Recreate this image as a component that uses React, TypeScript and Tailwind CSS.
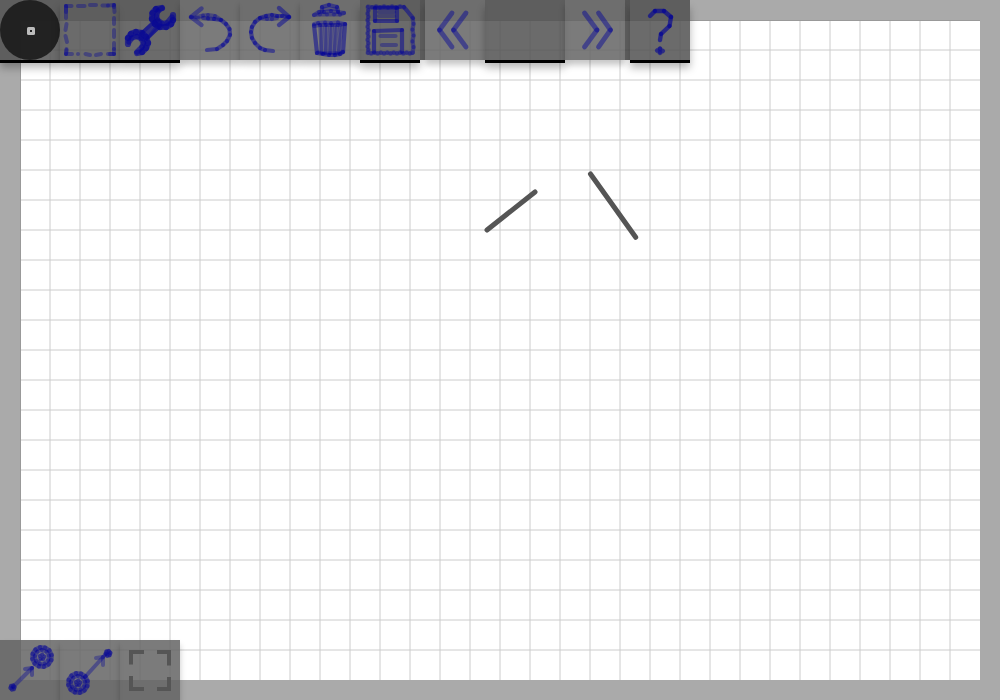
import type { ReactNode } from "react";

type Pt = [number, number];

/** A hand-drawn stroke: translucent segments whose joints overlap and darken. */
function Sketch({ pts, w = 4.4, o = 0.5 }: { pts: Pt[]; w?: number; o?: number }) {
  return (
    <g stroke="#000098" strokeWidth={w} strokeLinecap="round" strokeOpacity={o}>
      {pts.slice(1).map((p, i) => (
        <line key={i} x1={pts[i][0]} y1={pts[i][1]} x2={p[0]} y2={p[1]} />
      ))}
    </g>
  );
}

function Icon({ children }: { children: ReactNode }) {
  return (
    <svg className="block size-[60px]" viewBox="0 0 60 60" fill="none">
      {children}
    </svg>
  );
}

function ring(cx: number, cy: number, r: number, n: number): Pt[] {
  return Array.from({ length: n + 1 }, (_, i) => {
    const a = (i / n) * Math.PI * 2 - 0.2;
    return [cx + r * Math.cos(a), cy + r * Math.sin(a)] as Pt;
  });
}

function dense(a: Pt, b: Pt, n: number, wob = 0.5): Pt[] {
  return Array.from({ length: n + 1 }, (_, i) => {
    const t = i / n;
    const s = i % 2 ? wob : -wob;
    const horizontal = Math.abs(b[0] - a[0]) > Math.abs(b[1] - a[1]);
    return [a[0] + (b[0] - a[0]) * t + (horizontal ? 0 : s), a[1] + (b[1] - a[1]) * t + (horizontal ? s : 0)] as Pt;
  });
}

function PenIcon() {
  return (
    <Icon>
      <circle cx="30" cy="30" r="30" fill="#1d1d1d" fillOpacity="0.93" />
      <rect x="27" y="27" width="8" height="8" rx="1.5" fill="#bcbcbc" />
      <rect x="30" y="30" width="2" height="2" fill="#222" />
    </Icon>
  );
}

function SelectIcon() {
  const dashes: Pt[][] = [
    [[6, 6], [11.5, 6]], [[18, 6], [24.5, 6]], [[30, 5], [36, 5]], [[42.5, 5.5], [48, 5.5]], [[48, 5.5], [54, 5]],
    [[6, 6], [6, 12]], [[6, 6], [6, 18]], [[6.5, 24], [5.5, 30]], [[5.5, 36], [7, 42]], [[6.5, 49], [6, 54]],
    [[6, 54], [12, 54]], [[6, 54], [6.5, 50]], [[18, 54], [18, 54]], [[25.5, 54], [30, 55]], [[36, 55], [41, 54]],
    [[48, 54], [54, 54]], [[50, 54], [54, 54]], [[54, 54], [54, 49]], [[54, 49], [54, 43]], [[54, 37], [54, 30]],
    [[54, 24], [54, 18]], [[54.5, 12], [54, 5]], [[54, 7], [54, 5]],
  ];
  return <Icon>{dashes.map((d, i) => <Sketch key={i} pts={d} w={4} o={0.35} />)}</Icon>;
}

function WrenchIcon() {
  const head: Pt[] = [[42, 8], [36, 9], [32.5, 13], [32, 19], [35, 24], [40, 27], [46, 27], [51, 24], [53, 20], [53, 15]];
  const tail: Pt[] = [[8, 44], [8, 38], [11, 34], [16, 32], [22, 33], [26, 37], [28, 43], [26, 48], [22, 52], [17, 53]];
  return (
    <Icon>
      <g opacity="0.92">
        <Sketch pts={head} w={6.2} o={0.65} />
        <Sketch pts={[[42, 8], [38, 11], [36.5, 16], [37.5, 20], [42, 23.5], [47, 23], [52, 17]]} w={5.4} o={0.6} />
        <Sketch pts={tail} w={6.2} o={0.65} />
        <Sketch pts={[[9, 42], [12, 38], [17, 36.5], [21, 38.5], [23.5, 43], [22, 47], [17, 52]]} w={5.4} o={0.6} />
        <Sketch pts={[[24, 36], [37, 24]]} w={11} o={0.6} />
        <Sketch pts={[[22, 33], [34, 22], [39, 27], [27, 39], [38, 25]]} w={3.6} o={0.4} />
      </g>
    </Icon>
  );
}

function UndoIcon() {
  return (
    <Icon>
      <Sketch pts={[[21.5, 8.5], [11, 17], [21.5, 25]]} w={4.4} o={0.42} />
      <Sketch pts={[[11, 17], [19, 18]]} w={3.6} o={0.35} />
      <Sketch pts={[[23, 18], [28, 18.5], [34, 19], [41, 20], [46, 24], [49.5, 29], [50, 35], [47, 41], [43, 45], [37, 49], [27, 50]]} w={4.2} o={0.47} />
      <Sketch pts={[[17, 17], [23, 15.5], [28, 15], [35, 16], [41, 20]]} w={4} o={0.33} />
    </Icon>
  );
}

function RedoIcon() {
  return (
    <Icon>
      <Sketch pts={[[39, 8], [49, 17], [39, 25]]} w={4.4} o={0.48} />
      <Sketch pts={[[49, 17], [42, 16], [37, 16], [32, 15], [26, 16], [20, 18], [15, 22], [12, 27], [11, 32], [12, 38], [15, 43], [20, 48], [25, 50], [33, 51]]} w={4.2} o={0.47} />
      <Sketch pts={[[37, 18], [32, 19], [27, 19], [20, 18]]} w={4.2} o={0.33} />
    </Icon>
  );
}

function TrashIcon() {
  return (
    <Icon>
      <Sketch pts={[[14, 15], [19, 12], [24, 12], [31, 11], [38, 12], [44, 13]]} w={4.2} o={0.38} />
      <Sketch pts={[[14, 15], [20, 14.5], [27, 14.5], [34, 14.5], [40, 14.5], [44, 13]]} w={4.2} o={0.33} />
      <Sketch pts={[[22, 11], [22, 7], [29, 5], [37, 7], [38, 11]]} w={4.2} o={0.45} />
      <Sketch pts={[[24, 9], [36, 9]]} w={4} o={0.25} />
      <Sketch pts={[[14, 26], [20, 25], [26, 25], [32, 25], [38, 25], [45, 24], [38, 22.5], [31, 23], [25, 22.5], [18, 23], [14, 24]]} w={4.2} o={0.36} />
      <Sketch pts={[[14, 25], [17, 53], [23, 54], [29, 55], [35, 55], [40, 54], [43, 52], [45, 24]]} w={4.2} o={0.5} />
      <Sketch pts={[[18, 52], [24, 53], [30, 53], [36, 53], [43, 52]]} w={3.5} o={0.25} />
      {[20, 25, 30, 35, 40].map((x) => (
        <Sketch key={x} pts={[[x, 25], [30 + (x - 30) * 0.85, 53], [x + 1.8, 27]]} w={3.8} o={0.28} />
      ))}
    </Icon>
  );
}

function SaveIcon() {
  return (
    <Icon>
      <Sketch pts={dense([8, 7], [44, 7], 9, 0.4)} w={4.2} o={0.37} />
      <Sketch pts={[[44, 7], [53, 18]]} w={4.2} o={0.5} />
      <Sketch pts={dense([53, 18], [53, 53], 6, 0.5)} w={4.2} o={0.37} />
      <Sketch pts={dense([53, 53], [8, 53], 14, 0.4)} w={4.2} o={0.32} />
      <Sketch pts={dense([8, 53], [8, 7], 14, 0.4)} w={4.2} o={0.32} />
      <Sketch pts={[[15, 8], [15, 21], [37, 21], [37, 8], [15, 8]]} w={4.2} o={0.5} />
      <Sketch pts={[[19, 12], [34, 12]]} w={4.2} o={0.33} />
      <Sketch pts={[[19, 16], [34, 16]]} w={4.2} o={0.28} />
      <Sketch pts={[[14, 52], [14, 31], [42, 30], [42, 52]]} w={4.2} o={0.5} />
      <Sketch pts={[[20.5, 36], [35.5, 36]]} w={4.2} o={0.35} />
      <Sketch pts={[[22, 45], [36, 45]]} w={4.2} o={0.35} />
    </Icon>
  );
}

function PreviousIcon() {
  return (
    <Icon>
      <Sketch pts={[[27, 13], [14.5, 30], [27, 47]]} w={4.8} o={0.45} />
      <Sketch pts={[[41, 13], [28.5, 30], [41, 47]]} w={4.8} o={0.45} />
    </Icon>
  );
}

function NextIcon() {
  return (
    <Icon>
      <Sketch pts={[[19.5, 13], [32, 30], [19.5, 47]]} w={4.8} o={0.45} />
      <Sketch pts={[[33.5, 13], [45.5, 30], [33.5, 47]]} w={4.8} o={0.45} />
    </Icon>
  );
}

function HelpIcon() {
  return (
    <Icon>
      <Sketch pts={[[20, 16], [25, 11], [34, 11], [41, 17], [39.5, 26], [31, 34], [30, 40]]} w={4.4} o={0.62} />
      <Sketch pts={[[30, 48.5], [33, 51], [30, 53], [27, 50.5], [30, 48.5], [30, 52]]} w={4.2} o={0.35} />
    </Icon>
  );
}

function Target({ x, y }: { x: number; y: number }) {
  return (
    <>
      <Sketch pts={ring(x, y, 9.8, 12)} w={4.6} o={0.4} />
      <Sketch pts={ring(x, y, 7, 9)} w={4} o={0.36} />
      <Sketch pts={ring(x, y, 2.4, 5)} w={4} o={0.34} />
      <Sketch pts={[[x - 4, y + 5], [x, y + 2]]} w={2.5} o={0.3} />
    </>
  );
}

function ToTargetIcon() {
  return (
    <Icon>
      <Sketch pts={[[13, 47], [32, 28]]} w={4} o={0.37} />
      <Sketch pts={[[25, 29], [32, 28], [32, 35]]} w={4} o={0.38} />
      <Sketch pts={ring(12.5, 47.5, 2, 6)} w={4.4} o={0.35} />
      <Target x={42} y={17} />
    </Icon>
  );
}

function FromTargetIcon() {
  return (
    <Icon>
      <Sketch pts={[[25, 37], [45, 15]]} w={4} o={0.37} />
      <Sketch pts={[[36, 18], [43, 17], [43, 25]]} w={4} o={0.33} />
      <Sketch pts={ring(48, 13.3, 2.3, 6)} w={4.4} o={0.42} />
      <Target x={18} y={43} />
    </Icon>
  );
}

function FullscreenIcon() {
  return (
    <Icon>
      <path
        d="M24 12H11V24.5M37 12H49V25.5M11 36V49H24M49 37V49H37"
        stroke="#555"
        strokeWidth="4"
      />
    </Icon>
  );
}

function Tool({ icon, raised = false, wide = false }: { icon?: ReactNode; raised?: boolean; wide?: boolean }) {
  return (
    <button
      className={`block h-[60px] shrink-0 ${wide ? "w-20" : "w-[60px]"} ${
        raised
          ? "bg-[rgba(81,81,81,0.85)] shadow-[0_3px_0_#000,0_8px_8px_rgba(0,0,0,0.28)]"
          : "bg-[rgba(100,100,100,0.85)] shadow-[0_5px_6px_rgba(0,0,0,0.22)]"
      }`}
    >
      {icon}
    </button>
  );
}

function Separator() {
  return <div className="h-[60px] w-[5px] shrink-0 bg-[rgba(70,70,70,0.85)]" />;
}

function Board() {
  const columns = Array.from({ length: 31 }, (_, i) => 50 + i * 30);
  const rows = Array.from({ length: 21 }, (_, i) => 50 + i * 30);
  return (
    <svg className="block h-[700px] w-[1000px]" viewBox="0 0 1000 700">
      <rect width="1000" height="700" fill="#aaa" />
      <rect x="20" y="20" width="960" height="660" fill="#fff" />
      <path d="M20.5 680V20.5H980" stroke="#999" fill="none" />
      <g stroke="#ccc">
        {columns.map((x) => <line key={x} x1={x} y1="21" x2={x} y2="680" />)}
        {rows.map((y) => <line key={y} x1="21" y1={y} x2="980" y2={y} />)}
      </g>
      <g stroke="#555" strokeWidth="5" strokeLinecap="round">
        <line x1="487" y1="230" x2="535" y2="192" />
        <line x1="590.5" y1="174" x2="635.7" y2="237.3" />
      </g>
    </svg>
  );
}

export default function App() {
  return (
    <main className="grid h-[700px] w-[1000px] overflow-hidden">
      <div className="col-start-1 row-start-1">
        <Board />
      </div>
      <div className="z-10 col-start-1 row-start-1 flex flex-col items-start justify-between">
        <div className="flex">
          <Tool raised icon={<PenIcon />} />
          <Tool raised icon={<SelectIcon />} />
          <Tool raised icon={<WrenchIcon />} />
          <Tool icon={<UndoIcon />} />
          <Tool icon={<RedoIcon />} />
          <Tool icon={<TrashIcon />} />
          <Tool raised icon={<SaveIcon />} />
          <Separator />
          <Tool icon={<PreviousIcon />} />
          <Tool raised wide />
          <Tool icon={<NextIcon />} />
          <Separator />
          <Tool raised icon={<HelpIcon />} />
        </div>
        <div className="flex">
          <Tool icon={<ToTargetIcon />} />
          <Tool icon={<FromTargetIcon />} />
          <Tool icon={<FullscreenIcon />} />
        </div>
      </div>
    </main>
  );
}
